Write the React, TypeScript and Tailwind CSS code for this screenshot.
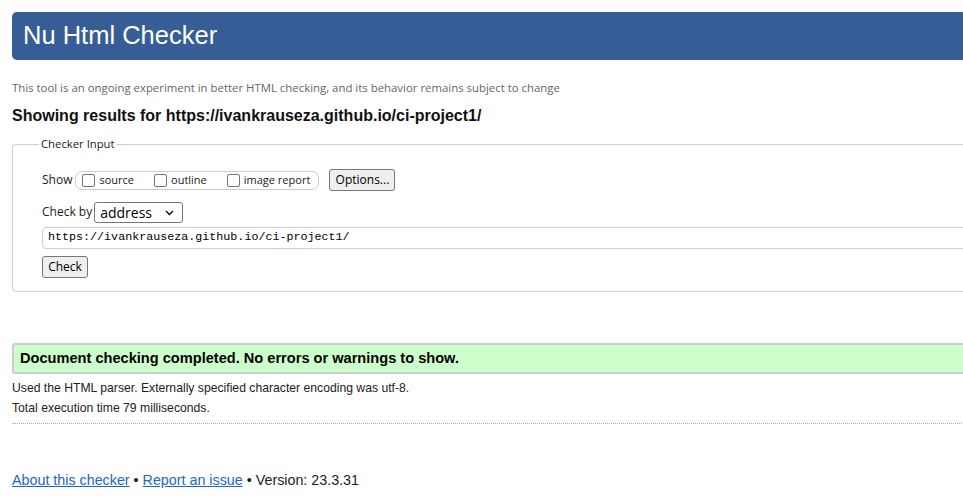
import React from "react";

function Box({ label }: { label: string }) {
  return (
    <span className="inline-flex items-center">
      <span className="inline-block w-[13px] h-[13px] border border-[#767676] rounded-[2px] bg-white mr-[4px]" />
      <span>{label}</span>
    </span>
  );
}

export default function App() {
  return (
    <div className="w-[963px] h-[500px] overflow-hidden bg-white">
      <div className="w-[1000px] pl-[12px] pt-[12px] font-['Liberation_Sans',Arial,sans-serif] text-[#222]">
        <div className="h-[48px] bg-[#365d95] rounded-l-[5px] flex items-center pl-[11px]">
          <h1 className="text-white text-[25.5px] leading-none">Nu Html Checker</h1>
        </div>
        <p className="mt-[21px] text-[11.4px] leading-[14px] text-[#666] font-['Open_Sans',sans-serif]">
          This tool is an ongoing experiment in better HTML checking, and its behavior remains subject to change
        </p>
        <h2 className="mt-[12px] text-[16px] leading-[18px] font-bold text-[#111]">
          Showing results for https://ivankrauseza.github.io/ci-project1/
        </h2>
        <div className="relative mt-[19px] h-[148px] border border-[#ccc] rounded-l-[4px] pl-[29px] pt-[24px] font-['Open_Sans',sans-serif] text-[12px]">
          <span className="absolute left-[26px] top-[-9px] bg-white px-[2px] text-[11.3px] leading-[16px] text-[#222]">
            Checker Input
          </span>
          <div className="flex items-center h-[22px]">
            <span className="mr-[3px]">Show</span>
            <span className="inline-flex items-center gap-[20px] h-[19px] w-[244px] border border-[#ccc] rounded-[7px] pl-[6px] text-[11px]">
              <Box label="source" />
              <Box label="outline" />
              <Box label="image report" />
            </span>
            <button className="ml-[10px] h-[22px] w-[66px] bg-[#efefef] border border-[#767676] rounded-[3px] text-[12px] text-black">
              Options...
            </button>
          </div>
          <div className="flex items-center mt-[10px] h-[22px]">
            <span className="mr-[2px]">Check by</span>
            <span className="relative inline-flex items-center h-[21px] w-[89px] border border-[#767676] rounded-[3px] pl-[5px] text-[14px] text-black">
              address
              <svg className="absolute right-[8px] top-[7px]" width="9" height="6" viewBox="0 0 9 6">
                <path d="M1 1l3.5 3.5L8 1" fill="none" stroke="#000" strokeWidth="1.3" />
              </svg>
            </span>
          </div>
          <div className="mt-[4px] h-[22px] border border-[#ccc] rounded-l-[4px] flex items-center pl-[5px] font-['Liberation_Mono',monospace] text-[11.7px] text-black">
            https://ivankrauseza.github.io/ci-project1/
          </div>
          <button className="mt-[7px] h-[22px] w-[46px] bg-[#efefef] border border-[#767676] rounded-[3px] text-[12px] text-black">
            Check
          </button>
        </div>
        <div className="mt-[51px] h-[31px] bg-[#ccffcc] border-y-2 border-l-2 border-[#ccc] rounded-l-[3px] flex items-center pl-[6px] text-[14.6px] font-bold text-black">
          Document checking completed. No errors or warnings to show.
        </div>
        <p className="mt-[4px] text-[12.2px] leading-[20px]">
          Used the HTML parser. Externally specified character encoding was utf-8.
        </p>
        <p className="text-[12.2px] leading-[20px]">Total execution time 79 milliseconds.</p>
        <div className="mt-[5px] border-t border-dotted border-[#aaa]" />
        <p className="mt-[48px] text-[14.3px] leading-[16px]">
          <a className="text-[#2266cc] underline">About this checker</a> •{" "}
          <a className="text-[#2266cc] underline">Report an issue</a> • Version: 23.3.31
        </p>
      </div>
    </div>
  );
}
